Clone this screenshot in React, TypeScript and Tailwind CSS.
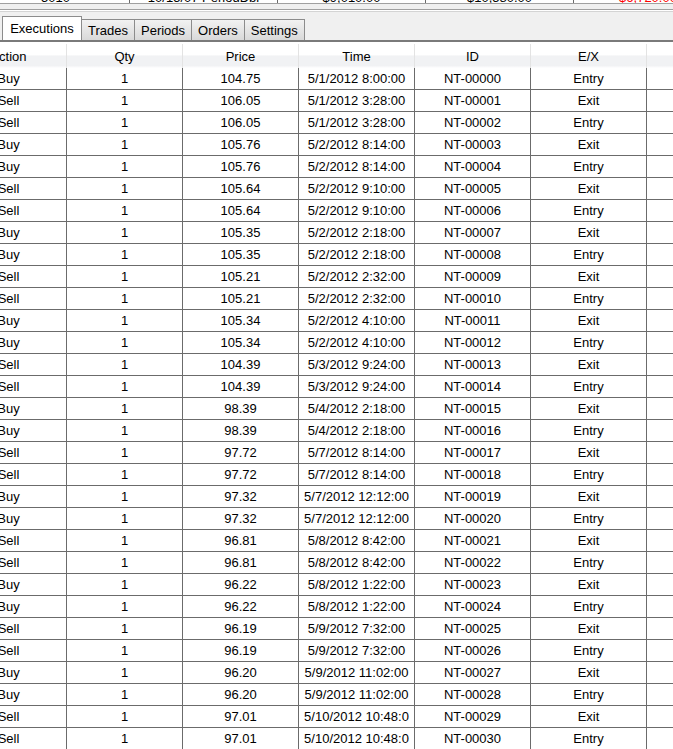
type Exec = {
  action: string;
  qty: string;
  price: string;
  time: string;
  id: string;
  ex: string;
};

const raw: [string, string, string, string][] = [
  ["Buy", "104.75", "5/1/2012 8:00:00", "Entry"],
  ["Sell", "106.05", "5/1/2012 3:28:00", "Exit"],
  ["Sell", "106.05", "5/1/2012 3:28:00", "Entry"],
  ["Buy", "105.76", "5/2/2012 8:14:00", "Exit"],
  ["Buy", "105.76", "5/2/2012 8:14:00", "Entry"],
  ["Sell", "105.64", "5/2/2012 9:10:00", "Exit"],
  ["Sell", "105.64", "5/2/2012 9:10:00", "Entry"],
  ["Buy", "105.35", "5/2/2012 2:18:00", "Exit"],
  ["Buy", "105.35", "5/2/2012 2:18:00", "Entry"],
  ["Sell", "105.21", "5/2/2012 2:32:00", "Exit"],
  ["Sell", "105.21", "5/2/2012 2:32:00", "Entry"],
  ["Buy", "105.34", "5/2/2012 4:10:00", "Exit"],
  ["Buy", "105.34", "5/2/2012 4:10:00", "Entry"],
  ["Sell", "104.39", "5/3/2012 9:24:00", "Exit"],
  ["Sell", "104.39", "5/3/2012 9:24:00", "Entry"],
  ["Buy", "98.39", "5/4/2012 2:18:00", "Exit"],
  ["Buy", "98.39", "5/4/2012 2:18:00", "Entry"],
  ["Sell", "97.72", "5/7/2012 8:14:00", "Exit"],
  ["Sell", "97.72", "5/7/2012 8:14:00", "Entry"],
  ["Buy", "97.32", "5/7/2012 12:12:00", "Exit"],
  ["Buy", "97.32", "5/7/2012 12:12:00", "Entry"],
  ["Sell", "96.81", "5/8/2012 8:42:00", "Exit"],
  ["Sell", "96.81", "5/8/2012 8:42:00", "Entry"],
  ["Buy", "96.22", "5/8/2012 1:22:00", "Exit"],
  ["Buy", "96.22", "5/8/2012 1:22:00", "Entry"],
  ["Sell", "96.19", "5/9/2012 7:32:00", "Exit"],
  ["Sell", "96.19", "5/9/2012 7:32:00", "Entry"],
  ["Buy", "96.20", "5/9/2012 11:02:00", "Exit"],
  ["Buy", "96.20", "5/9/2012 11:02:00", "Entry"],
  ["Sell", "97.01", "5/10/2012 10:48:0", "Exit"],
  ["Sell", "97.01", "5/10/2012 10:48:0", "Entry"],
];

const executions: Exec[] = raw.map(([action, price, time, ex], i) => ({
  action,
  qty: "1",
  price,
  time,
  id: "NT-" + String(i).padStart(5, "0"),
  ex,
}));

const tabs = ["Executions", "Trades", "Periods", "Orders", "Settings"];

const Cell = ({ children }: { children?: React.ReactNode }) => (
  <div className="w-[116px] shrink-0 border-r border-[#6b6b6b] px-[4px] text-center overflow-hidden whitespace-nowrap">
    {children}
  </div>
);

const HeadCell = ({ children }: { children?: React.ReactNode }) => (
  <div className="w-[116px] shrink-0 border-r border-[#e3e3e3] text-center whitespace-nowrap">
    {children}
  </div>
);

const App = () => {
  return (
    <div className="w-[673px] h-[749px] overflow-hidden bg-white text-[13px] text-black font-['Liberation_Sans',Arial,sans-serif]">
      {/* remnant of the grid above */}
      <div className="h-[4px] overflow-hidden border-b border-[#a0a0a0]">
        <div className="-mt-[12px] flex h-[20px] leading-[20px] -ml-[18px]">
          <div className="w-[148px] shrink-0 border-r border-[#6b6b6b] text-center">5010</div>
          <div className="w-[148px] shrink-0 border-r border-[#6b6b6b] text-center">10/15/07 PeriodDbl</div>
          <div className="w-[148px] shrink-0 border-r border-[#6b6b6b] text-center">$9,010.00</div>
          <div className="w-[148px] shrink-0 border-r border-[#6b6b6b] text-center">$10,580.00</div>
          <div className="w-[148px] shrink-0 text-center text-[#ff0000]">$6,720.00</div>
        </div>
      </div>
      <div className="h-[5px] bg-[#f0f0f0]" />
      <div className="h-px bg-[#a0a0a0]" />
      <div className="h-px bg-white" />
      <div className="h-px bg-[#d4d4d4]" />

      {/* tab strip */}
      <div className="flex h-[28px] items-start bg-[#f0f0f0] pl-[2px]">
        {tabs.map((t, i) =>
          i === 0 ? (
            <div
              key={t}
              className="mt-[4px] h-[24px] w-[80px] border border-b-0 border-[#8c8c8c] bg-white text-center leading-[24px]"
            >
              {t}
            </div>
          ) : (
            <div
              key={t}
              className="mt-[7px] h-[21px] border border-l-0 border-b-0 border-[#8c8c8c] bg-gradient-to-b from-[#f2f2f2] to-[#d9d9d9] px-[6px] leading-[22px]"
            >
              {t}
            </div>
          )
        )}
      </div>
      <div className="h-[2px] bg-[#7a7a7a]" />
      <div className="h-[2px] bg-white" />

      {/* column headers */}
      <div className="flex h-[24px] leading-[26px] -ml-[49px] bg-[linear-gradient(to_bottom,#ffffff_0%,#ffffff_45%,#f1f2f4_50%,#f1f2f4_90%,#ffffff_100%)]">
        <HeadCell>Action</HeadCell>
        <HeadCell>Qty</HeadCell>
        <HeadCell>Price</HeadCell>
        <HeadCell>Time</HeadCell>
        <HeadCell>ID</HeadCell>
        <HeadCell>E/X</HeadCell>
        <div className="flex-1" />
      </div>

      {/* rows */}
      <div className="-ml-[49px]">
        {executions.map((e) => (
          <div key={e.id} className="flex h-[22px] leading-[21px] border-b border-[#6b6b6b]">
            <Cell>{e.action}</Cell>
            <Cell>{e.qty}</Cell>
            <Cell>{e.price}</Cell>
            <Cell>{e.time}</Cell>
            <Cell>{e.id}</Cell>
            <Cell>{e.ex}</Cell>
            <div className="flex-1" />
          </div>
        ))}
      </div>
    </div>
  );
};

export default App;
